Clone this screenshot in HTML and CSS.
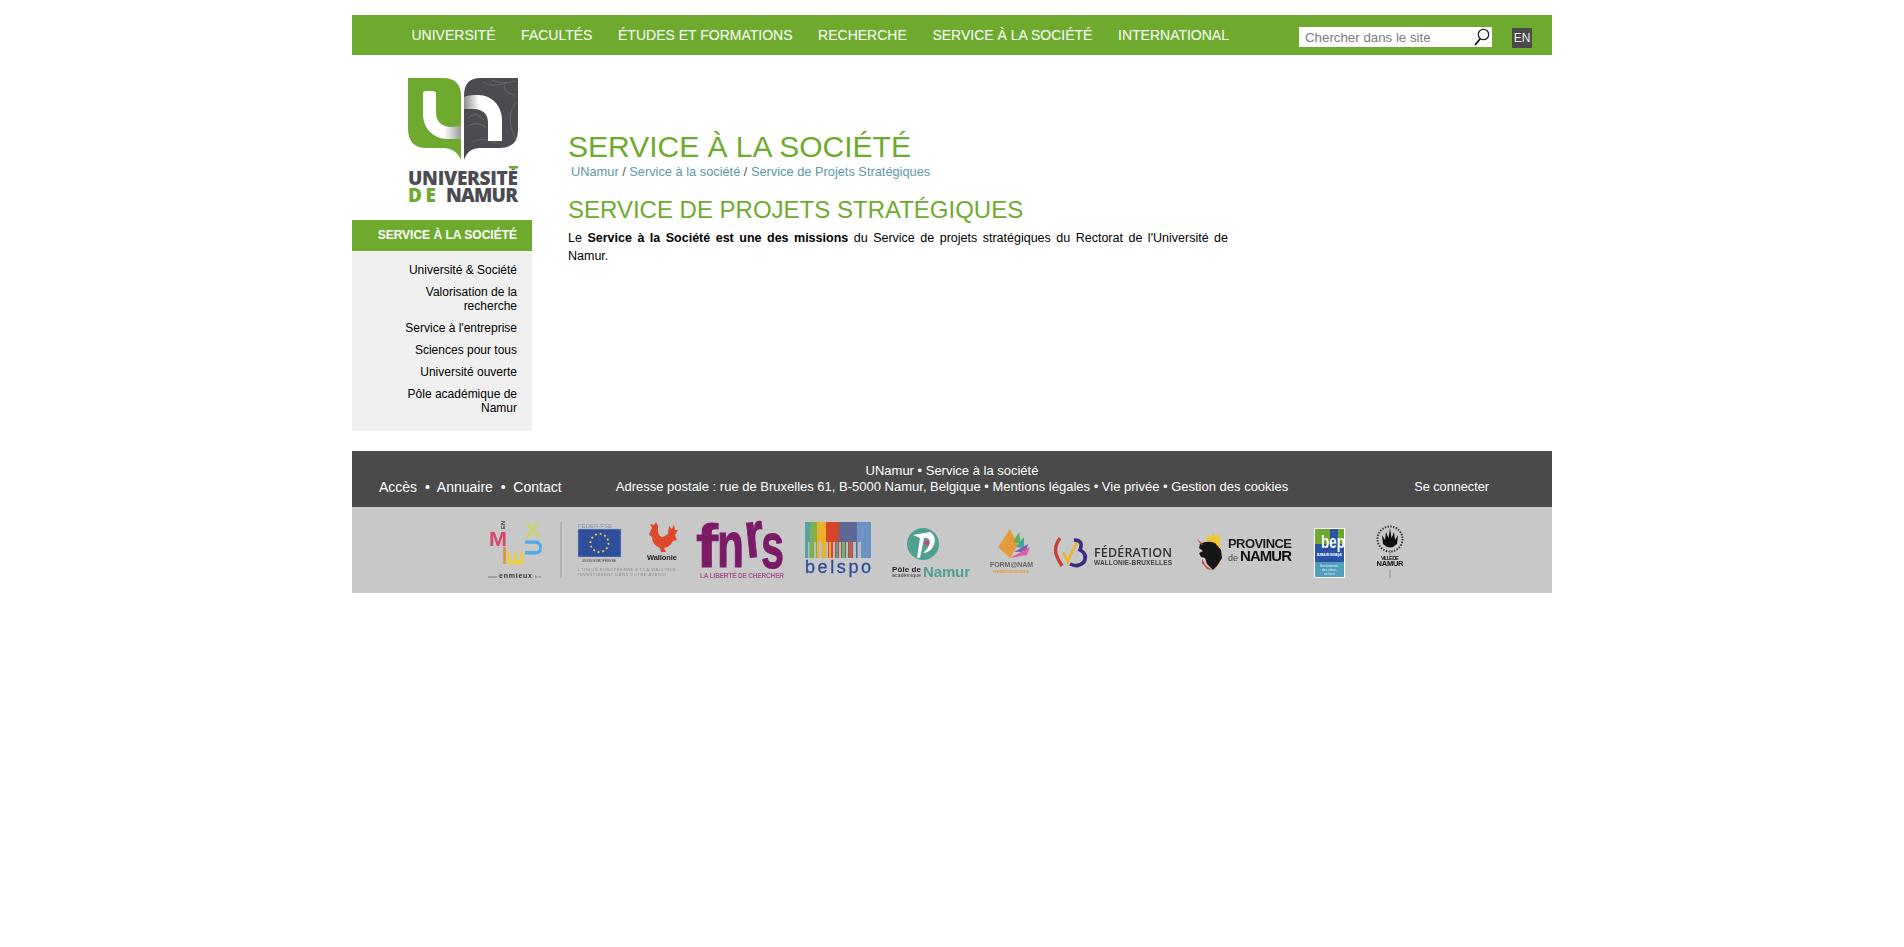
FILE: index.html
```html
<!DOCTYPE html>
<html>
<head>
    <meta charset="utf-8">
    <title>Service à la société - UNamur</title>
    <link rel="stylesheet" href="styles.css">
</head>
<body>
    <div class="container">
        <div class="topbar">
            <ul class="main-nav">
                <li>UNIVERSITÉ</li>
                <li>FACULTÉS</li>
                <li>ÉTUDES ET FORMATIONS</li>
                <li>RECHERCHE</li>
                <li>SERVICE À LA SOCIÉTÉ</li>
                <li>INTERNATIONAL</li>
            </ul>
            <div class="search-box">
                <span>Chercher dans le site</span>
                <svg width="18" height="20" viewBox="0 0 18 20">
                    <circle cx="10.5" cy="7.5" r="5.2" fill="none" stroke="#222" stroke-width="1.3"/>
                    <path d="M7 12 L2 18" stroke="#111" stroke-width="1.8"/>
                </svg>
            </div>
            <div class="lang">EN</div>
        </div>

        <div class="columns">
            <div class="sidebar">
                <svg class="logo" width="110" height="125" viewBox="0 0 110 125">
                    <defs>
                        <linearGradient id="u-fade" x1="0" x2="1" y1="0" y2="0">
                            <stop offset="0.55" stop-color="#fff"/>
                            <stop offset="1" stop-color="#9a9a9a"/>
                        </linearGradient>
                        <linearGradient id="n-fade" x1="0" x2="1" y1="0" y2="0">
                            <stop offset="0" stop-color="#8d8d8d"/>
                            <stop offset="0.4" stop-color="#fff"/>
                        </linearGradient>
                    </defs>
                    <path d="M0 0 H35 Q53 0 53 18 V82 Q48 70 35 70 H18 Q0 70 0 50 Z" fill="#6eaa2e"/>
                    <path d="M56 18 Q56 0 72 0 H110 V52 Q110 70 92 70 H72 Q60 70 56 82 Z" fill="#4b4b52"/>
                    <g fill="none" stroke="#66666c" stroke-width="1">
                        <path d="M74 4 Q86 10 98 5 Q92 13 106 17"/>
                        <path d="M84 2 Q94 7 108 3"/>
                        <path d="M108 24 Q96 38 108 62"/>
                        <path d="M60 40 Q68 32 76 42"/>
                        <path d="M60 48 Q70 42 78 50"/>
                        <path d="M64 64 Q76 58 90 66"/>
                    </g>
                    <path d="M15 16 Q15 13 18 13 H25 Q28 13 28 16 V34 C28 44 34 49 44 49 L53 48 V61 H40 C25 61 15 50 15 36 Z" fill="url(#u-fade)"/>
                    <path d="M56 19 C60 17 66 17 70 17 C84 17 94 28 94 42 V63 H80 V44 C80 36 74 31 66 31 H56 Z" fill="url(#n-fade)"/>
                    <text class="logo-word" x="0" y="107" textLength="110" fill="#4b4b52">UNIVERSITÉ</text>
                    <rect x="100" y="86.5" width="10" height="4" fill="#fff"/>
                    <rect x="101" y="88" width="9" height="2.4" fill="#6eaa2e"/>
                    <text class="logo-word" x="0" y="124" textLength="28" fill="#6eaa2e">DE</text>
                    <text class="logo-word" x="38" y="124" textLength="72" fill="#4b4b52">NAMUR</text>
                </svg>
                <div class="side-title">SERVICE À LA SOCIÉTÉ</div>
                <ul class="side-menu">
                    <li>Université &amp; Société</li>
                    <li>Valorisation de la recherche</li>
                    <li>Service à l'entreprise</li>
                    <li>Sciences pour tous</li>
                    <li>Université ouverte</li>
                    <li>Pôle académique de Namur</li>
                </ul>
            </div>

            <div class="content">
                <h1>SERVICE À LA SOCIÉTÉ</h1>
                <div class="breadcrumb"><span>UNamur</span> / <span>Service à la société</span> / <span>Service de Projets Stratégiques</span></div>
                <h2>SERVICE DE PROJETS STRATÉGIQUES</h2>
                <p>Le <b>Service à la Société est une des missions</b> du Service de projets stratégiques du Rectorat de l'Université de Namur.</p>
            </div>
        </div>

        <div class="footer">
            <div class="footer-links">Accès &nbsp;•&nbsp; Annuaire &nbsp;•&nbsp; Contact</div>
            <div class="footer-address">
                UNamur • Service à la société<br>
                Adresse postale : rue de Bruxelles 61, B-5000 Namur, Belgique • Mentions légales • Vie privée • Gestion des cookies
            </div>
            <div class="footer-login">Se connecter</div>
        </div>

        <div class="partners">
            <!-- en mieux -->
            <svg class="p-mieux" width="54" height="60" viewBox="0 0 54 60">
                <text x="0" y="0" font-size="6" font-weight="bold" fill="#444" text-anchor="middle" transform="translate(17 5) rotate(-90)">EN</text>
                <text x="1" y="26" font-size="21" font-weight="bold" fill="#d9476f" textLength="18" lengthAdjust="spacingAndGlyphs">M</text>
                <text x="37" y="17" font-size="21" font-weight="bold" fill="#c9d46a" textLength="15" lengthAdjust="spacingAndGlyphs">X</text>
                <text x="14" y="44" font-size="23" font-weight="bold" fill="#e8902f" textLength="5" lengthAdjust="spacingAndGlyphs">I</text>
                <text x="0" y="8" font-size="23" font-weight="bold" fill="#4fa9e8" text-anchor="middle" transform="translate(45.5 27.5) rotate(-90)">U</text>
                <text x="0" y="8" font-size="22" font-weight="bold" fill="#f0d02e" text-anchor="middle" transform="translate(27 38.5) rotate(-90)">E</text>
                <text x="0" y="58" font-size="4" fill="#666" textLength="10">www.</text>
                <text x="11" y="58" font-size="7" font-weight="bold" fill="#333" textLength="33">enmieux</text>
                <text x="45" y="58" font-size="4" fill="#666" textLength="8">.be</text>
            </svg>
            <!-- feder / wallonie -->
            <svg class="p-feder" width="118" height="60" viewBox="0 0 118 60">
                <rect x="0.5" y="2" width="1" height="56" fill="#9a9a9a"/>
                <text x="18" y="8" font-size="6" fill="#8090b8" textLength="34">FEDER-FSE</text>
                <rect x="18" y="9" width="43" height="28" fill="#2e4e9c" stroke="#9aa6c4" stroke-width="0.6"/>
                <circle cx="39.5" cy="23" r="9" fill="none" stroke="#f2d22e" stroke-width="1.8" stroke-dasharray="1.8 2.9"/>
                <text x="22" y="42" font-size="3" fill="#333" textLength="34">UNION EUROPÉENNE</text>
                <path d="M90 12 L92 8 L90 4 L94 5 L96 2 L98 6 L98 12 Q99 17 103 17 L108 14 L109 6 L112 9 L114 4 L115 10 L118 10 L115 15 L117 20 L113 21 Q110 27 104 28 L106 32 L101 32 L100 28 Q92 25 92 17 L89 15 Z" fill="#dc4a2a"/>
                <text x="87" y="40" font-size="7.5" font-weight="bold" fill="#222" textLength="30">Wallonie</text>
                <text x="18" y="51" font-size="4" fill="#8a8a8a" textLength="98">L'UNION EUROPÉENNE ET LA WALLONIE</text>
                <text x="18" y="56" font-size="4" fill="#8a8a8a" textLength="88">INVESTISSENT DANS VOTRE AVENIR</text>
            </svg>
            <!-- fnrs -->
            <svg class="p-fnrs" width="88" height="60" viewBox="0 0 88 60">
                <g fill="#7b1a66" stroke="#7b1a66" stroke-width="1">
                    <text x="0" y="47" font-size="62" font-weight="bold" textLength="22" lengthAdjust="spacingAndGlyphs">f</text>
                    <text x="21" y="47" font-size="65" font-weight="bold" textLength="27" lengthAdjust="spacingAndGlyphs">n</text>
                    <text x="49" y="37" font-size="65" font-weight="bold" textLength="19" lengthAdjust="spacingAndGlyphs" transform="rotate(-6 58 20)">r</text>
                    <text x="65" y="48" font-size="64" font-weight="bold" textLength="23" lengthAdjust="spacingAndGlyphs">s</text>
                </g>
                <text x="4" y="58" font-size="6.5" font-weight="bold" fill="#a5568f" textLength="84">LA LIBERTÉ DE CHERCHER</text>
            </svg>
            <!-- belspo -->
            <svg class="p-belspo" width="66" height="60" viewBox="0 0 66 60">
                <rect x="0" y="2" width="5" height="36" fill="#57a0a0"/>
                <rect x="5" y="2" width="7" height="36" fill="#7fb04f"/>
                <rect x="12" y="2" width="9" height="36" fill="#ecb02a"/>
                <rect x="21" y="2" width="13" height="36" fill="#d4472c"/>
                <rect x="34" y="2" width="18" height="36" fill="#5f6795"/>
                <rect x="52" y="2" width="14" height="36" fill="#6b93c4"/>
                <g fill="#bdbdbd">
                    <rect x="3" y="22" width="1.5" height="16"/>
                    <rect x="9" y="22" width="2" height="16"/>
                    <rect x="14" y="22" width="3" height="16"/>
                    <rect x="21" y="22" width="2" height="16"/>
                    <rect x="28" y="22" width="2" height="16"/>
                    <rect x="34" y="22" width="2" height="16"/>
                    <rect x="41" y="22" width="2" height="16"/>
                    <rect x="48" y="22" width="3" height="16"/>
                    <rect x="53" y="22" width="3" height="16"/>
                </g>
                <g>
                    <rect x="24" y="22" width="2" height="16" fill="#ecb02a"/>
                    <rect x="31" y="22" width="2" height="16" fill="#57a0a0"/>
                    <rect x="37" y="22" width="3" height="16" fill="#7fb04f"/>
                    <rect x="44" y="22" width="3" height="16" fill="#e0592a"/>
                </g>
                <text x="0" y="53" font-size="18" fill="#2a4f9a" stroke="#2a4f9a" stroke-width="0.3" textLength="66">belspo</text>
            </svg>
            <!-- pole academique -->
            <svg class="p-pole" width="78" height="60" viewBox="0 0 78 60">
                <circle cx="31" cy="24" r="16" fill="#4f9f92"/>
                <path d="M21 15 L38 12 Q45 16 42 25 Q38 33 31 33 Q37 28 38 22 Q37 17 32 18 L28 38 L25 38 L28 18 Z" fill="#fff"/>
                <circle cx="35" cy="23" r="2.4" fill="#d83a82"/>
                <text x="0" y="52" font-size="8" font-weight="bold" fill="#222" textLength="29">Pôle de</text>
                <text x="0" y="57" font-size="5" fill="#333" textLength="29">académique</text>
                <text x="31" y="57" font-size="15" font-weight="bold" fill="#4f9f92" textLength="47">Namur</text>
            </svg>
            <!-- formanam -->
            <svg class="p-form" width="43" height="60" viewBox="0 0 43 60">
                <path d="M20 9 L8 27 L20 38 L28 25 Z" fill="#e39a3e"/>
                <path d="M23 22 L29 12 L31 24 Z" fill="#5fb04f"/>
                <path d="M26 27 L34 17 L34 28 Z" fill="#3fa6a0"/>
                <path d="M24 32 L38 24 L36 32 Z" fill="#7a5fb0"/>
                <path d="M20 38 L40 27 L37 35 Z" fill="#e05fa0"/>
                <text x="0" y="47" font-size="7" font-weight="bold" fill="#666" textLength="43">FORM@NAM</text>
                <text x="3" y="53" font-size="3.6" font-weight="bold" fill="#e39a3e" textLength="36">FORMATION CONTINUE</text>
            </svg>
            <!-- federation -->
            <svg class="p-fede" width="118" height="60" viewBox="0 0 118 60">
                <path d="M6 18 Q0 26 2 34 Q4 40 8 46" fill="none" stroke="#c8402f" stroke-width="3.4"/>
                <path d="M9 32 L14 42 Q18 30 24 22" fill="none" stroke="#f0b428" stroke-width="2.6"/>
                <path d="M20 20 Q30 20 26 30 Q34 34 30 42 Q24 48 16 44" fill="none" stroke="#3a2a80" stroke-width="3.6"/>
                <text class="open-word" x="40" y="37" font-size="12.5" fill="#333" textLength="78">FÉDÉRATION</text>
                <text x="40" y="44.5" font-size="6.5" font-weight="bold" fill="#444" textLength="78">WALLONIE-BRUXELLES</text>
            </svg>
            <!-- province -->
            <svg class="p-prov" width="95" height="60" viewBox="0 0 95 60">
                <path d="M10 14 L13 18 L16 13 L19 17 L23 13 V45 H16 V26 H10 Z" fill="#f0c62e"/>
                <path d="M3 24 Q10 20 18 23 L24 30 L25 38 L20 46 L16 50 L10 44 L8 38 L4 37 L2 33 L6 31 L2 28 Z" fill="#161616"/>
                <path d="M0 19 L6 24 L4 25 Z" fill="#c8402f"/>
                <path d="M5 39 L9 46 L15 50 L10 49 L5 43 Z" fill="#c8402f"/>
                <text x="31" y="28" font-size="13" font-weight="bold" fill="#1c1c1c" textLength="64">PROVINCE</text>
                <text x="31" y="41" font-size="9" fill="#444" textLength="10">de</text>
                <text x="43" y="41" font-size="15" font-weight="bold" fill="#111" textLength="52">NAMUR</text>
            </svg>
            <!-- bep -->
            <svg class="p-bep" width="31" height="60" viewBox="0 0 31 60">
                <rect x="0" y="8" width="31" height="50" fill="#fff"/>
                <rect x="1" y="9" width="29" height="33" fill="#2a53a8"/>
                <rect x="1" y="9" width="15" height="15" fill="#6da82f"/>
                <rect x="24" y="9" width="6" height="15" fill="#6da82f"/>
                <rect x="1" y="42" width="29" height="15" fill="#4f9ebb"/>
                <text x="7" y="28" font-size="19" font-weight="bold" fill="#fff" textLength="24" lengthAdjust="spacingAndGlyphs">bep</text>
                <text x="3" y="36" font-size="2.6" font-weight="bold" fill="#fff" textLength="25">BUREAU ÉCONOMIQUE</text>
                <text x="6" y="47" font-size="3" fill="#e8f4f8" textLength="19">Des hommes,</text>
                <text x="8" y="51" font-size="3" fill="#e8f4f8" textLength="15">des idées,</text>
                <text x="10" y="55" font-size="3" fill="#e8f4f8" textLength="11">un futur</text>
            </svg>
            <!-- ville de namur -->
            <svg class="p-ville" width="28" height="60" viewBox="0 0 28 60">
                <circle cx="14" cy="19" r="12.5" fill="none" stroke="#333" stroke-width="2" stroke-dasharray="1.4 1.4"/>
                <path d="M14 8 L15.5 18 L18 12 L19 20 L22 15 L21 24 Q14 31 7 24 L6 15 L9 20 L10 12 L12.5 18 Z" fill="#111"/>
                <rect x="13.5" y="30" width="1" height="5" fill="#888"/>
                <text x="5" y="40" font-size="5.5" font-weight="bold" fill="#222" textLength="18">VILLE DE</text>
                <text x="0.5" y="46" font-size="7.5" font-weight="bold" fill="#111" textLength="27">NAMUR</text>
                <rect x="13.5" y="50" width="1" height="8" fill="#888"/>
            </svg>
        </div>
    </div>
</body>
</html>
```

FILE: styles.css
```css
body {
    margin: 0;
    background-color: #fff;
    font-family: "Liberation Sans", Arial, sans-serif;
    font-size: 12px;
    color: #000;
}

ul {
    margin: 0;
    padding: 0;
    list-style: none;
}

.container {
    width: 1200px;
    margin: 0 auto;
    padding-top: 15px;
}

/* top bar */
.topbar {
    display: flex;
    align-items: flex-start;
    height: 40px;
    background-color: #6eaa2e;
}

.main-nav {
    display: flex;
    gap: 25.6px;
    width: 947px;
    padding-left: 59.5px;
    box-sizing: border-box;
    color: #fff;
    font-size: 14px;
    line-height: 40px;
}

.search-box {
    display: flex;
    align-items: center;
    justify-content: space-between;
    box-sizing: border-box;
    width: 193px;
    height: 20px;
    margin-top: 12px;
    padding: 0 1px 0 6px;
    background-color: #fff;
    color: #7b7b7b;
    font-size: 13.3px;
}

.lang {
    width: 20px;
    height: 20px;
    margin: 13px 0 0 20px;
    background-color: #4a4a4a;
    color: #eee;
    font-size: 12px;
    line-height: 21px;
    text-align: center;
}

/* columns */
.columns {
    display: flex;
}

.sidebar {
    width: 180px;
    flex: none;
}

.logo {
    display: block;
    margin: 23px 0 17px 56px;
    overflow: visible;
}

.side-title {
    height: 31px;
    padding-right: 15px;
    background-color: #6eaa2e;
    color: #fff;
    font-size: 12px;
    font-weight: bold;
    line-height: 30px;
    text-align: right;
}

.side-menu {
    padding: 12px 15px 8px 35px;
    background-color: #f0f0f0;
    line-height: 14px;
    text-align: right;
}

.side-menu li {
    margin-bottom: 8px;
}

.content {
    width: 660px;
    margin-left: 36px;
    padding-top: 74px;
}

h1, h2 {
    margin: 0;
    font-weight: normal;
    color: #6eaa2e;
}

h1 {
    font-size: 30px;
    line-height: 36px;
}

.breadcrumb {
    margin-bottom: 16px;
    padding-left: 3px;
    color: #555;
    font-size: 12.8px;
    line-height: 14px;
}

.breadcrumb span {
    color: #5b9aa6;
}

h2 {
    font-size: 24px;
    line-height: 30px;
}

.content p {
    margin: 5px 0 0;
    font-size: 12.5px;
    line-height: 17.5px;
    text-align: justify;
}

/* footer */
.footer {
    display: grid;
    grid-template-columns: 260px 1fr 260px;
    align-items: end;
    height: 56px;
    margin-top: 20px;
    box-sizing: border-box;
    padding-bottom: 12px;
    background-color: #4a4a4a;
    color: #fff;
    line-height: 16px;
}

.footer-links {
    padding-left: 27px;
    font-size: 14px;
}

.footer-address {
    text-align: center;
    font-size: 13px;
}

.footer-login {
    padding-right: 63px;
    text-align: right;
    font-size: 12.7px;
}

/* partner logos */
.partners {
    display: flex;
    align-items: flex-start;
    height: 86px;
    box-sizing: border-box;
    padding: 13px 0 0 136px;
    background-color: #c8c8c8;
}

.partners svg {
    flex: none;
    overflow: visible;
    font-family: "Liberation Sans", Arial, sans-serif;
    filter: blur(0.3px);
}

.p-feder { margin-left: 18px; }
.p-fnrs { margin-left: 18px; }
.p-belspo { margin-left: 21px; }
.p-pole { margin-left: 21px; }
.p-form { margin-left: 20px; }
.p-fede { margin-left: 21px; }
.p-prov { margin-left: 25px; }
.p-bep { margin-left: 22px; }
.p-ville { margin-left: 31px; }

.logo-word {
    font-family: "Open Sans", "Liberation Sans", sans-serif;
    font-size: 19px;
    font-weight: 800;
}

.open-word {
    font-family: "Open Sans", "Liberation Sans", sans-serif;
    font-weight: 600;
}
```
